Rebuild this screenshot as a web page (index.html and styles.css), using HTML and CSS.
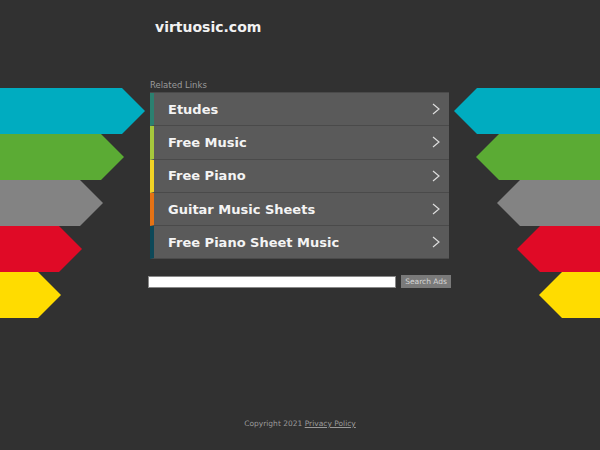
FILE: index.html
```html
<!DOCTYPE html>
<html lang="en">
<head>
    <meta charset="UTF-8">
    <meta name="viewport" content="width=device-width, initial-scale=1.0">
    <title>virtuosic.com</title>
    <link rel="stylesheet" href="styles.css">
</head>
<body>
    <header class="site-header">
        <div class="site-name">virtuosic.com</div>
    </header>

    <div class="stage">
        <div class="arrows arrows-left">
            <div class="arrow cyan"></div>
            <div class="arrow green"></div>
            <div class="arrow gray"></div>
            <div class="arrow red"></div>
            <div class="arrow yellow"></div>
        </div>

        <main class="center">
            <div class="related-label">Related Links</div>
            <ul class="links">
                <li class="link bar-teal"><a href="#">Etudes</a><svg class="chevron" viewBox="0 0 8 12"><polyline points="1,1 7,6 1,11"/></svg></li>
                <li class="link bar-lime"><a href="#">Free Music</a><svg class="chevron" viewBox="0 0 8 12"><polyline points="1,1 7,6 1,11"/></svg></li>
                <li class="link bar-yellow"><a href="#">Free Piano</a><svg class="chevron" viewBox="0 0 8 12"><polyline points="1,1 7,6 1,11"/></svg></li>
                <li class="link bar-orange"><a href="#">Guitar Music Sheets</a><svg class="chevron" viewBox="0 0 8 12"><polyline points="1,1 7,6 1,11"/></svg></li>
                <li class="link bar-navy"><a href="#">Free Piano Sheet Music</a><svg class="chevron" viewBox="0 0 8 12"><polyline points="1,1 7,6 1,11"/></svg></li>
            </ul>
            <form class="search" onsubmit="return false;">
                <input type="text" class="search-input">
                <button type="submit" class="search-button">Search Ads</button>
            </form>
        </main>

        <div class="arrows arrows-right">
            <div class="arrow cyan"></div>
            <div class="arrow green"></div>
            <div class="arrow gray"></div>
            <div class="arrow red"></div>
            <div class="arrow yellow"></div>
        </div>
    </div>

    <footer class="site-footer">
        Copyright 2021 <a href="#">Privacy Policy</a>
    </footer>
</body>
</html>
```

FILE: styles.css
```css
/* Parked domain page */
body {
    display: flex;
    flex-direction: column;
    min-height: 100vh;
    margin: 0;
    background-color: #313131;
    color: white;
    font-family: "DejaVu Sans", Verdana, sans-serif;
}

.site-header {
    width: 300px;
    margin: 0 auto;
    padding-top: 19px;
}

.site-name {
    padding-left: 5px;
    font-size: 14px;
    font-weight: bold;
    line-height: 16px;
    color: #f2f2f2;
}

.stage {
    display: grid;
    grid-template-columns: 1fr 300px 1fr;
    margin-top: 45px;
}

/* side arrows */
.arrows {
    display: flex;
    flex-direction: column;
    padding-top: 8px;
}

.arrows-left {
    align-items: flex-start;
}

.arrows-right {
    align-items: flex-end;
}

.arrow {
    height: 46px;
}

.arrows-left .arrow {
    clip-path: polygon(0 0, calc(100% - 23px) 0, 100% 50%, calc(100% - 23px) 100%, 0 100%);
}

.arrows-right .arrow {
    clip-path: polygon(23px 0, 100% 0, 100% 100%, 23px 100%, 0 50%);
}

.arrows-left .cyan { width: 145px; }
.arrows-left .green { width: 124px; }
.arrows-left .gray { width: 103px; }
.arrows-left .red { width: 82px; }
.arrows-left .yellow { width: 61px; }

.arrows-right .cyan { width: 146px; }
.arrows-right .green { width: 124px; }
.arrows-right .gray { width: 103px; }
.arrows-right .red { width: 83px; }
.arrows-right .yellow { width: 61px; }

.cyan { background-color: #00acc0; }
.green { background-color: #5bab34; }
.gray { background-color: #838383; }
.red { background-color: #e00a26; }
.yellow { background-color: #ffdc00; }

/* links panel */
.related-label {
    font-size: 8.5px;
    line-height: 10px;
    color: #9a9a9a;
    margin-bottom: 2px;
}

.links {
    list-style: none;
    margin: 0;
    padding: 0;
    width: 299px;
    background-color: #5a5a5a;
    border-top: 1px solid #4a4a4a;
}

.link {
    display: flex;
    align-items: center;
    justify-content: space-between;
    height: 32.3px;
    padding: 0 9px 0 14px;
    border-left: 4px solid #2b8070;
    border-bottom: 1px solid #4a4a4a;
}

.link a {
    font-size: 13px;
    font-weight: bold;
    color: #f4f4f4;
    text-decoration: none;
}

.bar-teal { border-left-color: #2b8070; }
.bar-lime { border-left-color: #a6c83c; }
.bar-yellow { border-left-color: #f2d325; }
.bar-orange { border-left-color: #e57214; }
.bar-navy { border-left-color: #0d4858; }

.chevron {
    width: 8px;
    height: 12px;
    fill: none;
    stroke: #dcdcdc;
    stroke-width: 1.2;
}

/* search */
.search {
    display: flex;
    align-items: center;
    justify-content: space-between;
    width: 303px;
    margin: 16px 0 0 -2px;
}

.search-input {
    box-sizing: border-box;
    width: 248px;
    height: 12px;
    margin: 0;
    padding: 0;
    border: 1px solid #888;
    background: white;
}

.search-button {
    height: 13px;
    margin: 0;
    padding: 0 4px;
    border: none;
    background-color: #7a7a7a;
    color: #d6d6d6;
    font-family: "DejaVu Sans", Verdana, sans-serif;
    font-size: 7.5px;
    line-height: 13px;
}

/* footer */
.site-footer {
    margin-top: auto;
    padding-bottom: 21px;
    text-align: center;
    font-size: 7.5px;
    line-height: 10px;
    color: #9a9a9a;
}

.site-footer a {
    color: #9a9a9a;
}
```
